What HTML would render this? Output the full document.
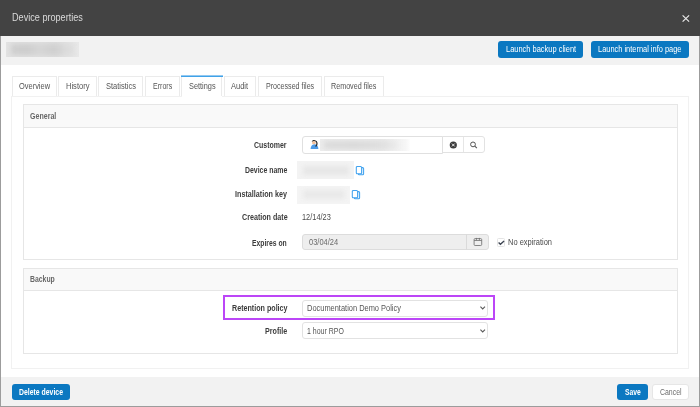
<!DOCTYPE html>
<html><head><meta charset="utf-8">
<style>
*{box-sizing:border-box;margin:0;padding:0}
html,body{width:700px;height:407px;overflow:hidden;background:#9c9c9c;font-family:"Liberation Sans",sans-serif}
.a{position:absolute}
.t{position:absolute;white-space:nowrap;line-height:20px}
.sx{display:inline-block;transform-origin:0 50%}
.hdr{left:0;top:0;width:700px;height:36px;background:#434343}
.band{left:1px;top:36px;width:697.5px;height:29px;background:#f2f2f2}
.body{left:1px;top:65px;width:697.5px;height:311.5px;background:#fff}
.foot{left:1px;top:376.5px;width:697.5px;height:29px;background:#f2f2f2}
.btn{position:absolute;background:#0b78c1;border-radius:3px}
.tab{position:absolute;top:76px;height:20px;border:1px solid #ebebeb;border-bottom:none;background:#fff}
.tab.act{border-top:none;height:20px}
.tabc{left:11.2px;top:96px;width:677.6px;height:272.5px;border:1px solid #f1f1f1}
.pnl{position:absolute;border:1px solid #e6e6e6;background:#fff}
.ph{position:absolute;left:0;top:0;right:0;background:#f9f9f9;border-bottom:1px solid #e6e6e6}
.box{position:absolute;border:1px solid #dedede;border-radius:3px;background:#fff}
.blur{position:absolute;filter:blur(1.2px)}
</style></head><body>
<div class="a hdr"></div>
<svg class="a" style="left:681px;top:14px" width="10" height="9" viewBox="0 0 10 9"><path d="M1.6 1.3L8.1 7.6M8.1 1.3L1.6 7.6" stroke="#ececec" stroke-width="1.15" fill="none"/></svg>
<div class="a band"></div>
<div class="a body"></div>
<div class="a foot"></div>
<div class="a" style="left:6.2px;top:41.6px;width:72.6px;height:15.6px;background:linear-gradient(90deg,#e2e2e2,#dedede 70%,#e8e8e8);overflow:hidden"><div class="blur" style="left:5px;top:2px;width:62px;height:11.5px;background:linear-gradient(90deg,#d0d0d0,#cdcdcd 25%,#d6d6d6 45%,#cfcfcf 70%,#dcdcdc 90%);filter:blur(2.2px)"></div></div>
<div class="btn" style="left:498.4px;top:41px;width:84.7px;height:17px"></div>
<div class="btn" style="left:590.7px;top:41px;width:98.3px;height:17px"></div>
<div class="tab" style="left:11.9px;width:45.1px"></div>
<div class="tab" style="left:58.2px;width:38.8px"></div>
<div class="tab" style="left:98.4px;width:45.1px"></div>
<div class="tab" style="left:145.1px;width:34.9px"></div>
<div class="tab act" style="left:181.1px;width:41.3px"></div>
<div class="tab" style="left:224px;width:31.8px"></div>
<div class="tab" style="left:257.9px;width:63.9px"></div>
<div class="tab" style="left:323.5px;width:60.3px"></div>
<div class="a tabc"></div>
<div class="a" style="left:181px;top:75px;width:41.5px;height:1px;background:#93c9f1"></div><div class="a" style="left:181px;top:76px;width:41.5px;height:1px;background:#40a2e8"></div><div class="a" style="left:182px;top:96px;width:40px;height:1px;background:#fff"></div>
<!-- General panel -->
<div class="pnl" style="left:23.2px;top:104.3px;width:655px;height:155.4px"><div class="ph" style="height:23px"></div></div>
<!-- Backup panel -->
<div class="pnl" style="left:23.2px;top:268.4px;width:655px;height:85.6px"><div class="ph" style="height:22px"></div></div>
<!-- customer -->
<div class="box" style="left:442px;top:136px;width:43px;height:17px;border-color:#e2e2e2;border-radius:0 3px 3px 0"></div>
<div class="box" style="left:302px;top:136px;width:141px;height:18px;border-color:#e0e0e0;border-radius:3px 0 0 3px"></div>
<div class="a" style="left:463px;top:137px;width:1px;height:15px;background:#e6e6e6"></div>
<svg class="a" style="left:449px;top:141px" width="9" height="9" viewBox="0 0 9 9"><circle cx="4.3" cy="4" r="3.6" fill="#3c3c3c"/><path d="M2.9 2.6L5.7 5.4M5.7 2.6L2.9 5.4" stroke="#fff" stroke-width="0.9"/></svg>
<svg class="a" style="left:469px;top:140px" width="10" height="10" viewBox="0 0 10 10"><circle cx="4" cy="4.4" r="2.4" stroke="#555" stroke-width="1" fill="none"/><path d="M5.8 6.2L7.9 8.2" stroke="#555" stroke-width="1.1"/></svg>
<svg class="a" style="left:310px;top:139px" width="10" height="11" viewBox="0 0 10 11"><path d="M0.6 10C0.6 6.9 2.4 5.2 4.5 5.2S8.4 6.9 8.4 10Z" fill="#4d9be8"/><ellipse cx="3.9" cy="3.7" rx="1.9" ry="1.6" fill="#f6c29b"/><path d="M1.8 3.1C1.8 1.5 2.9 0.9 4.1 0.9C5.4 0.9 6.4 1.7 6.4 3C5.6 2.3 4.8 2.1 4 2.1C3.2 2.1 2.4 2.5 1.8 3.1Z" fill="#2e2e2e"/><path d="M6.1 2C7.1 3.5 7.2 5.9 5.6 7.5" stroke="#2a2a2a" stroke-width="1.2" fill="none"/></svg>
<div class="a" style="left:320px;top:139px;width:90.3px;height:11.9px;background:linear-gradient(90deg,#ececec,#eaeaea 70%,#f6f6f6 95%,#fdfdfd);overflow:hidden"><div class="blur" style="left:4px;top:2px;width:78px;height:8px;background:linear-gradient(90deg,#dcdcdc,#dadada 40%,#dedede 70%,rgba(238,238,238,0));filter:blur(2px)"></div></div>
<div class="a" style="left:297px;top:161px;width:57.1px;height:18px;background:#f3f3f3;overflow:hidden"><div class="blur" style="left:6px;top:4.5px;width:46px;height:9px;background:#e7e7e7;filter:blur(2.2px)"></div></div>
<div class="a" style="left:297px;top:185.8px;width:53px;height:18px;background:#f4f4f4;overflow:hidden"><div class="blur" style="left:6px;top:4.5px;width:42px;height:9px;background:#e9e9e9;filter:blur(2.2px)"></div></div>
<!-- device name -->
<svg class="a" style="left:354px;top:164px" width="12" height="13" viewBox="0 0 12 13"><rect x="4.3" y="3.6" width="5.3" height="7.2" rx="1" stroke="#42a3ef" stroke-width="1.05" fill="#e3f1fc"/><rect x="2.3" y="2.4" width="5.3" height="7.4" rx="1" stroke="#42a3ef" stroke-width="1.05" fill="#fff"/></svg>
<!-- installation key -->
<svg class="a" style="left:350px;top:188px" width="12" height="13" viewBox="0 0 12 13"><rect x="4.3" y="3.6" width="5.3" height="7.2" rx="1" stroke="#42a3ef" stroke-width="1.05" fill="#e3f1fc"/><rect x="2.3" y="2.4" width="5.3" height="7.4" rx="1" stroke="#42a3ef" stroke-width="1.05" fill="#fff"/></svg>
<!-- expires -->
<div class="box" style="left:302.4px;top:233.5px;width:187px;height:16.5px;background:#eeeeee;border-color:#dcdcdc"></div>
<div class="a" style="left:466.2px;top:234px;width:1px;height:15.5px;background:#dadada"></div>
<svg class="a" style="left:472px;top:237px" width="12" height="10" viewBox="0 0 12 10"><rect x="2.1" y="1.6" width="7.6" height="6.9" rx="1" stroke="#707070" stroke-width="0.85" fill="none"/><path d="M2.1 3.5H9.7" stroke="#707070" stroke-width="0.8"/><path d="M4.4 0.9V3.3M7.4 0.9V3.3" stroke="#707070" stroke-width="0.8"/></svg>
<div class="box" style="left:496.9px;top:238.3px;width:8px;height:8.3px;border-color:#e4e4e4;border-radius:1.5px"></div>
<svg class="a" style="left:496px;top:238px" width="10" height="9" viewBox="0 0 10 9"><path d="M2.6 4.6L4.4 6.3L8.1 3" stroke="#3b4350" stroke-width="1.35" fill="none"/></svg>
<!-- backup -->
<div class="a" style="left:223.4px;top:295px;width:271.8px;height:24.7px;border:2px solid #bc46f7"></div>
<div class="box" style="left:302.3px;top:299.5px;width:185.6px;height:17px;border-color:#e2e2e2"></div>
<div class="box" style="left:302.3px;top:322.3px;width:185.6px;height:16.3px;border-color:#e2e2e2"></div>
<svg class="a" style="left:479px;top:305px" width="8" height="6" viewBox="0 0 8 6"><path d="M1.4 1.7L3.7 3.9L6 1.7" stroke="#5a5a5a" stroke-width="1.1" fill="none"/></svg>
<svg class="a" style="left:479px;top:328px" width="8" height="6" viewBox="0 0 8 6"><path d="M1.4 1.7L3.7 3.9L6 1.7" stroke="#5a5a5a" stroke-width="1.1" fill="none"/></svg>
<!-- footer -->
<div class="btn" style="left:12px;top:383.5px;width:58px;height:16.3px"></div>
<div class="btn" style="left:617.1px;top:383.5px;width:30.6px;height:16.4px"></div>
<div class="box" style="left:652.2px;top:383.5px;width:36.4px;height:16.4px;border-color:#e6e6e6"></div>
<div class="t" style="left:12.00px;top:8px;font-size:10px;font-weight:400;color:#dadada;"><span class="sx" style="transform:scaleX(0.911)">Device properties</span></div>
<div class="t" style="left:505.80px;top:39px;font-size:8.5px;font-weight:400;color:#fff;"><span class="sx" style="transform:scaleX(0.878)">Launch backup client</span></div>
<div class="t" style="left:597.90px;top:39px;font-size:8.5px;font-weight:400;color:#fff;"><span class="sx" style="transform:scaleX(0.874)">Launch internal info page</span></div>
<div class="t" style="left:18.70px;top:76px;font-size:8.7px;font-weight:400;color:#555;"><span class="sx" style="transform:scaleX(0.857)">Overview</span></div>
<div class="t" style="left:66.20px;top:76px;font-size:8.7px;font-weight:400;color:#555;"><span class="sx" style="transform:scaleX(0.868)">History</span></div>
<div class="t" style="left:106.00px;top:76px;font-size:8.7px;font-weight:400;color:#555;"><span class="sx" style="transform:scaleX(0.862)">Statistics</span></div>
<div class="t" style="left:152.90px;top:76px;font-size:8.7px;font-weight:400;color:#555;"><span class="sx" style="transform:scaleX(0.811)">Errors</span></div>
<div class="t" style="left:188.50px;top:76px;font-size:8.7px;font-weight:400;color:#555;"><span class="sx" style="transform:scaleX(0.846)">Settings</span></div>
<div class="t" style="left:231.40px;top:76px;font-size:8.7px;font-weight:400;color:#555;"><span class="sx" style="transform:scaleX(0.862)">Audit</span></div>
<div class="t" style="left:265.60px;top:76px;font-size:8.7px;font-weight:400;color:#555;"><span class="sx" style="transform:scaleX(0.817)">Processed files</span></div>
<div class="t" style="left:330.60px;top:76px;font-size:8.7px;font-weight:400;color:#555;"><span class="sx" style="transform:scaleX(0.825)">Removed files</span></div>
<div class="t" style="left:29.60px;top:106px;font-size:8.7px;font-weight:700;color:#686868;"><span class="sx" style="transform:scaleX(0.812)">General</span></div>
<div class="t" style="left:29.90px;top:269px;font-size:8.7px;font-weight:700;color:#686868;"><span class="sx" style="transform:scaleX(0.789)">Backup</span></div>
<div class="t" style="left:254.30px;top:135px;font-size:8.7px;font-weight:700;color:#3c3c3c;"><span class="sx" style="transform:scaleX(0.803)">Customer</span></div>
<div class="t" style="left:244.60px;top:160px;font-size:8.7px;font-weight:700;color:#3c3c3c;"><span class="sx" style="transform:scaleX(0.795)">Device name</span></div>
<div class="t" style="left:235.20px;top:184px;font-size:8.7px;font-weight:700;color:#3c3c3c;"><span class="sx" style="transform:scaleX(0.827)">Installation key</span></div>
<div class="t" style="left:241.50px;top:207px;font-size:8.7px;font-weight:700;color:#3c3c3c;"><span class="sx" style="transform:scaleX(0.822)">Creation date</span></div>
<div class="t" style="left:252.40px;top:233px;font-size:8.7px;font-weight:700;color:#3c3c3c;"><span class="sx" style="transform:scaleX(0.782)">Expires on</span></div>
<div class="t" style="left:231.70px;top:298px;font-size:8.7px;font-weight:700;color:#3c3c3c;"><span class="sx" style="transform:scaleX(0.822)">Retention policy</span></div>
<div class="t" style="left:265.10px;top:321px;font-size:8.7px;font-weight:700;color:#3c3c3c;"><span class="sx" style="transform:scaleX(0.820)">Profile</span></div>
<div class="t" style="left:302.40px;top:207px;font-size:8.5px;font-weight:400;color:#4a4a4a;"><span class="sx" style="transform:scaleX(0.870)">12/14/23</span></div>
<div class="t" style="left:309.10px;top:232px;font-size:8.5px;font-weight:400;color:#6a6a6a;"><span class="sx" style="transform:scaleX(0.879)">03/04/24</span></div>
<div class="t" style="left:507.70px;top:232px;font-size:8.7px;font-weight:400;color:#4a4a4a;"><span class="sx" style="transform:scaleX(0.860)">No expiration</span></div>
<div class="t" style="left:306.60px;top:298px;font-size:8.5px;font-weight:400;color:#555;"><span class="sx" style="transform:scaleX(0.876)">Documentation Demo Policy</span></div>
<div class="t" style="left:306.60px;top:321px;font-size:8.5px;font-weight:400;color:#555;"><span class="sx" style="transform:scaleX(0.820)">1 hour RPO</span></div>
<div class="t" style="left:19.00px;top:382px;font-size:8.5px;font-weight:700;color:#fff;"><span class="sx" style="transform:scaleX(0.810)">Delete device</span></div>
<div class="t" style="left:624.80px;top:382px;font-size:8.5px;font-weight:700;color:#fff;"><span class="sx" style="transform:scaleX(0.796)">Save</span></div>
<div class="t" style="left:659.80px;top:382px;font-size:8.5px;font-weight:400;color:#6c6c6c;"><span class="sx" style="transform:scaleX(0.816)">Cancel</span></div>
</body></html>
